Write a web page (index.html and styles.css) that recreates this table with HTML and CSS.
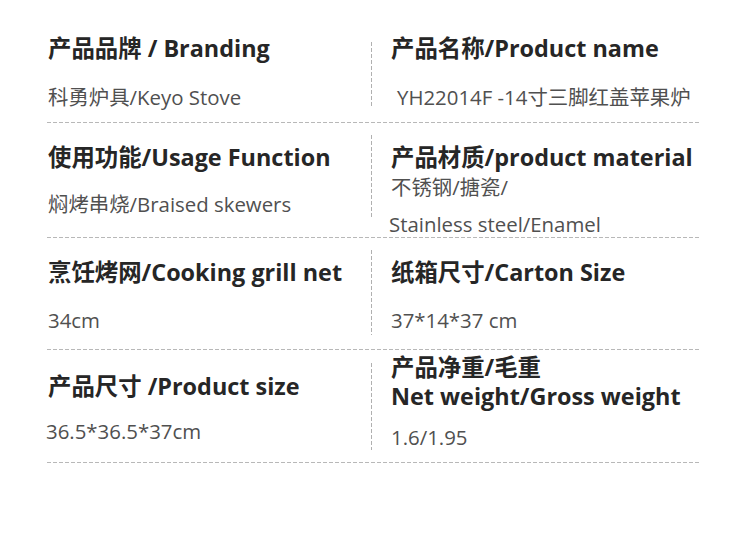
FILE: index.html
```html
<!DOCTYPE html>
<html lang="zh-CN">
<head>
<meta charset="utf-8">
<title>产品参数</title>
<link rel="stylesheet" href="styles.css">
</head>
<body>
<div class="spec">
  <div class="row row-first">
    <div class="cell">
      <div class="label">产品品牌 / Branding</div>
      <div class="value">科勇炉具/Keyo Stove</div>
    </div>
    <div class="vline"></div>
    <div class="cell cell-right">
      <div class="label">产品名称/Product name</div>
      <div class="value value-indent">YH22014F -14寸三脚红盖苹果炉</div>
    </div>
  </div>
  <div class="row row-second">
    <div class="cell">
      <div class="label">使用功能/Usage Function</div>
      <div class="value">焖烤串烧/Braised skewers</div>
    </div>
    <div class="vline vline-short"></div>
    <div class="cell cell-right">
      <div class="label">产品材质/product material</div>
      <div class="value value-tight">不锈钢/搪瓷/</div>
      <div class="value value-next value-out">Stainless steel/Enamel</div>
    </div>
  </div>
  <div class="row row-third">
    <div class="cell">
      <div class="label">烹饪烤网/Cooking grill net</div>
      <div class="value">34cm</div>
    </div>
    <div class="vline"></div>
    <div class="cell cell-right">
      <div class="label">纸箱尺寸/Carton Size</div>
      <div class="value">37*14*37 cm</div>
    </div>
  </div>
  <div class="row row-fourth">
    <div class="cell cell-low">
      <div class="label">产品尺寸 /Product size</div>
      <div class="value value-close value-out">36.5*36.5*37cm</div>
    </div>
    <div class="vline vline-long"></div>
    <div class="cell cell-right cell-high">
      <div class="label label-tight">产品净重/毛重</div>
      <div class="label label-tight">Net weight/Gross weight</div>
      <div class="value value-small">1.6/1.95</div>
    </div>
  </div>
</div>
</body>
</html>
```

FILE: styles.css
```css
html, body {
  margin: 0;
  padding: 0;
  background: #ffffff;
}

body {
  font-family: "Open Sans", "Noto Sans CJK SC", sans-serif;
  color: #262626;
}

.spec {
  width: 653px;
  margin-left: 47px;
  padding-top: 29px;
}

.row {
  display: grid;
  grid-template-columns: 324px 1px 1fr;
  height: 112px;
  background-image: repeating-linear-gradient(to right, #b8b8b8 0 4px, transparent 4px 6px);
  background-size: 100% 1px;
  background-repeat: no-repeat;
  background-position: left bottom;
  padding-bottom: 1px;
}

.row-first { height: 93px; }
.row-second { height: 114px; }
.row-third { height: 111px; }
.row-fourth { height: 112px; }

.cell {
  display: flex;
  flex-direction: column;
  padding-left: 1px;
  padding-top: 19px;
}

.row-first .cell { padding-top: 4px; }

.cell-right { padding-left: 19px; }

.cell-low { padding-top: 21px; }
.cell-high { padding-top: 3px; }

.vline {
  margin: 12px 0 14px;
  background-image: repeating-linear-gradient(to bottom, #b0b0b0 0 4px, transparent 4px 6px);
}

.row-first .vline { margin-top: 13px; }
.vline-short { margin-bottom: 20px; }
.vline-long { margin-top: 13px; margin-bottom: 12px; }

.label {
  font-size: 23.4px;
  font-weight: 700;
  line-height: 30px;
  color: #262626;
  white-space: nowrap;
}

.label-tight { line-height: 29px; }

.value {
  font-size: 20.4px;
  line-height: 30px;
  color: #505050;
  margin-top: 17px;
  white-space: nowrap;
}

.row-first .value { margin-top: 19px; }
.row-third .value { margin-top: 18px; }

.value-indent { padding-left: 6px; }
.value-tight { margin-top: 0; }
.value-next { margin-top: 7px; }
.value-out { margin-left: -2px; }
.value-close { margin-top: 15px; }
.value-small { margin-top: 11px; }
```
